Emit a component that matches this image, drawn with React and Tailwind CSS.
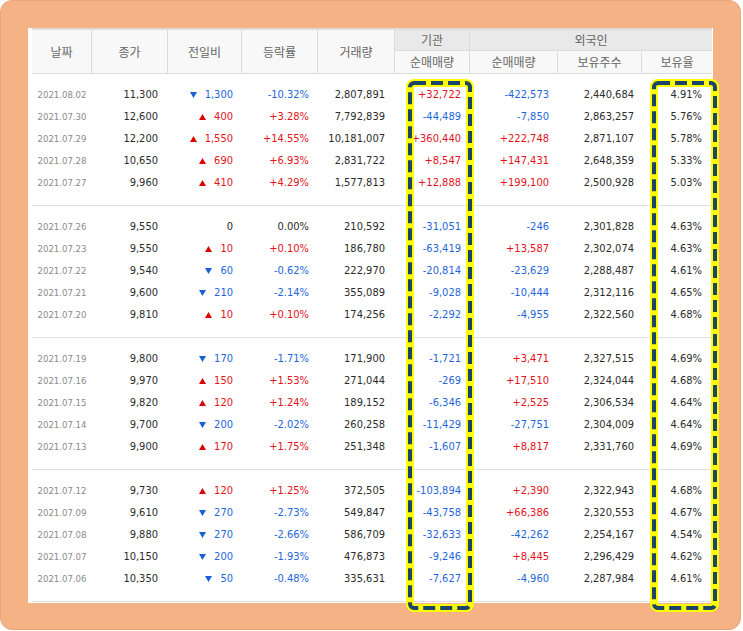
import React from "react";

const COLS = "grid-cols-[60px_76px_74px_76px_77px_75px_88px_84px_70px]";

// [date, close, dir, diff, rate, volume, inst, foreignNet, foreignHold, foreignRate]
const GROUPS = [
  [
    ["2021.08.02", "11,300", "down", "1,300", "-10.32%", "2,807,891", "+32,722", "-422,573", "2,440,684", "4.91%"],
    ["2021.07.30", "12,600", "up", "400", "+3.28%", "7,792,839", "-44,489", "-7,850", "2,863,257", "5.76%"],
    ["2021.07.29", "12,200", "up", "1,550", "+14.55%", "10,181,007", "+360,440", "+222,748", "2,871,107", "5.78%"],
    ["2021.07.28", "10,650", "up", "690", "+6.93%", "2,831,722", "+8,547", "+147,431", "2,648,359", "5.33%"],
    ["2021.07.27", "9,960", "up", "410", "+4.29%", "1,577,813", "+12,888", "+199,100", "2,500,928", "5.03%"],
  ],
  [
    ["2021.07.26", "9,550", "flat", "0", "0.00%", "210,592", "-31,051", "-246", "2,301,828", "4.63%"],
    ["2021.07.23", "9,550", "up", "10", "+0.10%", "186,780", "-63,419", "+13,587", "2,302,074", "4.63%"],
    ["2021.07.22", "9,540", "down", "60", "-0.62%", "222,970", "-20,814", "-23,629", "2,288,487", "4.61%"],
    ["2021.07.21", "9,600", "down", "210", "-2.14%", "355,089", "-9,028", "-10,444", "2,312,116", "4.65%"],
    ["2021.07.20", "9,810", "up", "10", "+0.10%", "174,256", "-2,292", "-4,955", "2,322,560", "4.68%"],
  ],
  [
    ["2021.07.19", "9,800", "down", "170", "-1.71%", "171,900", "-1,721", "+3,471", "2,327,515", "4.69%"],
    ["2021.07.16", "9,970", "up", "150", "+1.53%", "271,044", "-269", "+17,510", "2,324,044", "4.68%"],
    ["2021.07.15", "9,820", "up", "120", "+1.24%", "189,152", "-6,346", "+2,525", "2,306,534", "4.64%"],
    ["2021.07.14", "9,700", "down", "200", "-2.02%", "260,258", "-11,429", "-27,751", "2,304,009", "4.64%"],
    ["2021.07.13", "9,900", "up", "170", "+1.75%", "251,348", "-1,607", "+8,817", "2,331,760", "4.69%"],
  ],
  [
    ["2021.07.12", "9,730", "up", "120", "+1.25%", "372,505", "-103,894", "+2,390", "2,322,943", "4.68%"],
    ["2021.07.09", "9,610", "down", "270", "-2.73%", "549,847", "-43,758", "+66,386", "2,320,553", "4.67%"],
    ["2021.07.08", "9,880", "down", "270", "-2.66%", "586,709", "-32,633", "-42,262", "2,254,167", "4.54%"],
    ["2021.07.07", "10,150", "down", "200", "-1.93%", "476,873", "-9,246", "+8,445", "2,296,429", "4.62%"],
    ["2021.07.06", "10,350", "down", "50", "-0.48%", "335,631", "-7,627", "-4,960", "2,287,984", "4.61%"],
  ],
];

const signColor = (v) =>
  v.startsWith("+") ? "text-[#e3121b]" : v.startsWith("-") ? "text-[#1e66dc]" : "text-[#2b2b2b]";

function Arrow({ dir }) {
  if (dir === "up")
    return (
      <svg width="7" height="6" viewBox="0 0 7 6" className="mr-[8px] mb-[1px]">
        <polygon points="3.5,0 7,6 0,6" fill="#e00000" />
      </svg>
    );
  if (dir === "down")
    return (
      <svg width="7" height="6" viewBox="0 0 7 6" className="mr-[8px] mb-[1px]">
        <polygon points="0,0 7,0 3.5,6" fill="#1760d6" />
      </svg>
    );
  return null;
}

function Row({ r }) {
  const [date, close, dir, diff, rate, vol, inst, fNet, fHold, fRate] = r;
  const diffColor = dir === "up" ? "text-[#e3121b]" : dir === "down" ? "text-[#1e66dc]" : "text-[#2b2b2b]";
  return (
    <div className={`grid ${COLS} h-[22px] items-center text-[11px] text-[#2b2b2b]`}>
      <span className="text-center text-[9.5px] text-[#8a8a8a]">{date}</span>
      <span className="pr-[10px] text-right">{close}</span>
      <span className={`flex items-center justify-end pr-[9px] ${diffColor}`}>
        <Arrow dir={dir} />
        {diff}
      </span>
      <span className={`pr-[9px] text-right ${signColor(rate)}`}>{rate}</span>
      <span className="pr-[10px] text-right">{vol}</span>
      <span className={`pr-[9px] text-right ${signColor(inst)}`}>{inst}</span>
      <span className={`pr-[9px] text-right ${signColor(fNet)}`}>{fNet}</span>
      <span className="pr-[8px] text-right">{fHold}</span>
      <span className="pr-[10px] text-right">{fRate}</span>
    </div>
  );
}

function Highlight({ className, w, h }) {
  return (
    <svg width={w} height={h} className={`absolute ${className}`}>
      <rect x="4" y="4" width={w - 8} height={h - 8} rx="4" fill="none" stroke="#ffff00" strokeWidth="8" />
      <rect x="4" y="4" width={w - 8} height={h - 8} rx="4" fill="none" stroke="#1d4568" strokeWidth="4" strokeDasharray="12 5" />
    </svg>
  );
}

export default function App() {
  const th = "flex items-center justify-center border-r border-[#dcdcdc]";
  return (
    <div className="h-[630px] w-[741px] rounded-[12px] border border-[#e6a77b] bg-[#f4b285] pl-[27px] pt-[27px]">
      <div className="relative h-[575px] w-[685px] bg-white pl-[4px] pr-[1px] font-['DejaVu_Sans_Condensed','DejaVu_Sans',sans-serif]">
        {/* Header */}
        <div
          className={`grid ${COLS} grid-rows-[21px_22px] border-t-2 border-b border-[#dcdcdc] bg-[#f8f8f8] font-['Noto_Sans_CJK_KR',sans-serif] text-[12px] text-[#666]`}
        >
          <div className={`${th} row-span-2`}>날짜</div>
          <div className={`${th} row-span-2`}>종가</div>
          <div className={`${th} row-span-2`}>전일비</div>
          <div className={`${th} row-span-2`}>등락률</div>
          <div className={`${th} row-span-2`}>거래량</div>
          <div className={`${th} border-b bg-[#e9e9e9]`}>기관</div>
          <div className="col-span-3 flex items-center justify-center border-b border-[#dcdcdc] bg-[#e9e9e9]">외국인</div>
          <div className={th}>순매매량</div>
          <div className={th}>순매매량</div>
          <div className={th}>보유주수</div>
          <div className="flex items-center justify-center">보유율</div>
        </div>

        {/* Body */}
        {GROUPS.map((g, i) => (
          <div key={i} className="border-b border-[#e0e0e0] pb-[11px] pt-[10px]">
            {g.map((r) => (
              <Row key={r[0]} r={r} />
            ))}
          </div>
        ))}

        <Highlight className="left-[378px] top-[51px]" w={68} h={533} />
        <Highlight className="left-[622px] top-[51px]" w={69} h={533} />
      </div>
    </div>
  );
}
